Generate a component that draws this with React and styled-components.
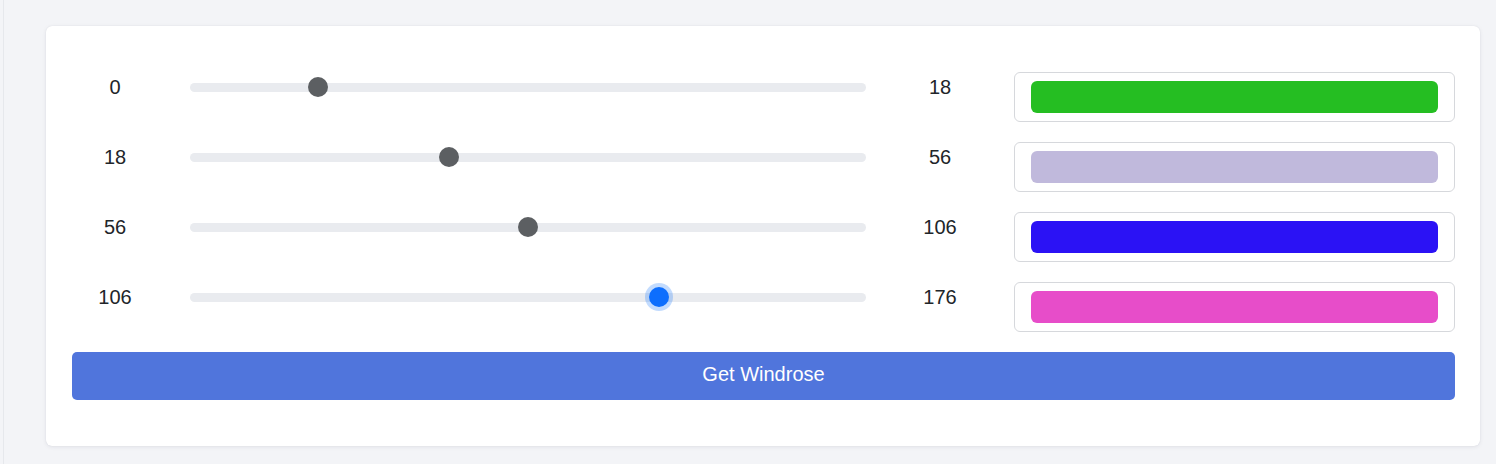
import React from "react";
import styled, { createGlobalStyle } from "styled-components";

const GlobalStyle = createGlobalStyle`
  html, body {
    margin: 0;
    padding: 0;
    background: #f3f4f7;
    font-family: "Liberation Sans", Arial, sans-serif;
  }
`;

export const Page = styled.main`
  min-height: 464px;
  box-sizing: border-box;
  margin-left: 3px;
  border-left: 1px solid #e6e8ec;
  padding: 26px 16px 18px 42px;
`;

export const Card = styled.section`
  background: #fff;
  border-radius: 6px;
  box-shadow: 0 1px 4px rgba(20, 30, 60, 0.08), 0 0 1px rgba(20, 30, 60, 0.12);
  padding: 46px 25px 46px 26px;
  display: flex;
  flex-direction: column;
  gap: 20px;
`;

export const Row = styled.div`
  display: grid;
  grid-template-columns: 86px 676px 84px 441px;
  column-gap: 32px;
  align-items: start;
`;

export const Bound = styled.span`
  font-size: 20px;
  line-height: 30px;
  color: #212529;
  text-align: center;
`;

export const Range = styled.input.attrs({ type: "range", min: 0, max: 100 })`
  -webkit-appearance: none;
  appearance: none;
  width: 100%;
  height: 30px;
  margin: 0;
  background: transparent;

  &::-webkit-slider-runnable-track {
    height: 9px;
    border-radius: 5px;
    background: #e9ebef;
  }

  &::-webkit-slider-thumb {
    -webkit-appearance: none;
    appearance: none;
    width: 20px;
    height: 20px;
    margin-top: -5.5px;
    border-radius: 50%;
    border: none;
    background: ${(p) => (p.$active ? "#0d6efd" : "#5c5f62")};
    box-shadow: ${(p) => (p.$active ? "0 0 0 4px rgba(13, 110, 253, 0.25)" : "none")};
  }
`;

export const Swatch = styled.div`
  border: 1px solid #d6d8dc;
  border-radius: 6px;
  padding: 8px 16px;
`;

export const SwatchFill = styled.div`
  height: 32px;
  border-radius: 6px;
  background: ${(p) => p.$color};
`;

export const Button = styled.button`
  height: 48px;
  padding: 0 0 4px;
  border: none;
  border-radius: 5px;
  background: #5075dc;
  color: #fff;
  font-family: "Liberation Sans", Arial, sans-serif;
  font-size: 20px;
  cursor: pointer;
`;

const bins = [
  { from: 0, to: 18, value: 18, color: "#25be22" },
  { from: 18, to: 56, value: 38, color: "#c0b9dc" },
  { from: 56, to: 106, value: 50, color: "#2b12f5" },
  { from: 106, to: 176, value: 70, color: "#e74dc9", active: true },
];

const App = () => {
  return (
    <>
      <GlobalStyle />
      <Page>
        <Card>
          {bins.map((b) => (
            <Row key={b.from}>
              <Bound>{b.from}</Bound>
              <Range defaultValue={b.value} $active={b.active} />
              <Bound>{b.to}</Bound>
              <Swatch>
                <SwatchFill $color={b.color} />
              </Swatch>
            </Row>
          ))}
          <Button>Get Windrose</Button>
        </Card>
      </Page>
    </>
  );
};

export default App;
